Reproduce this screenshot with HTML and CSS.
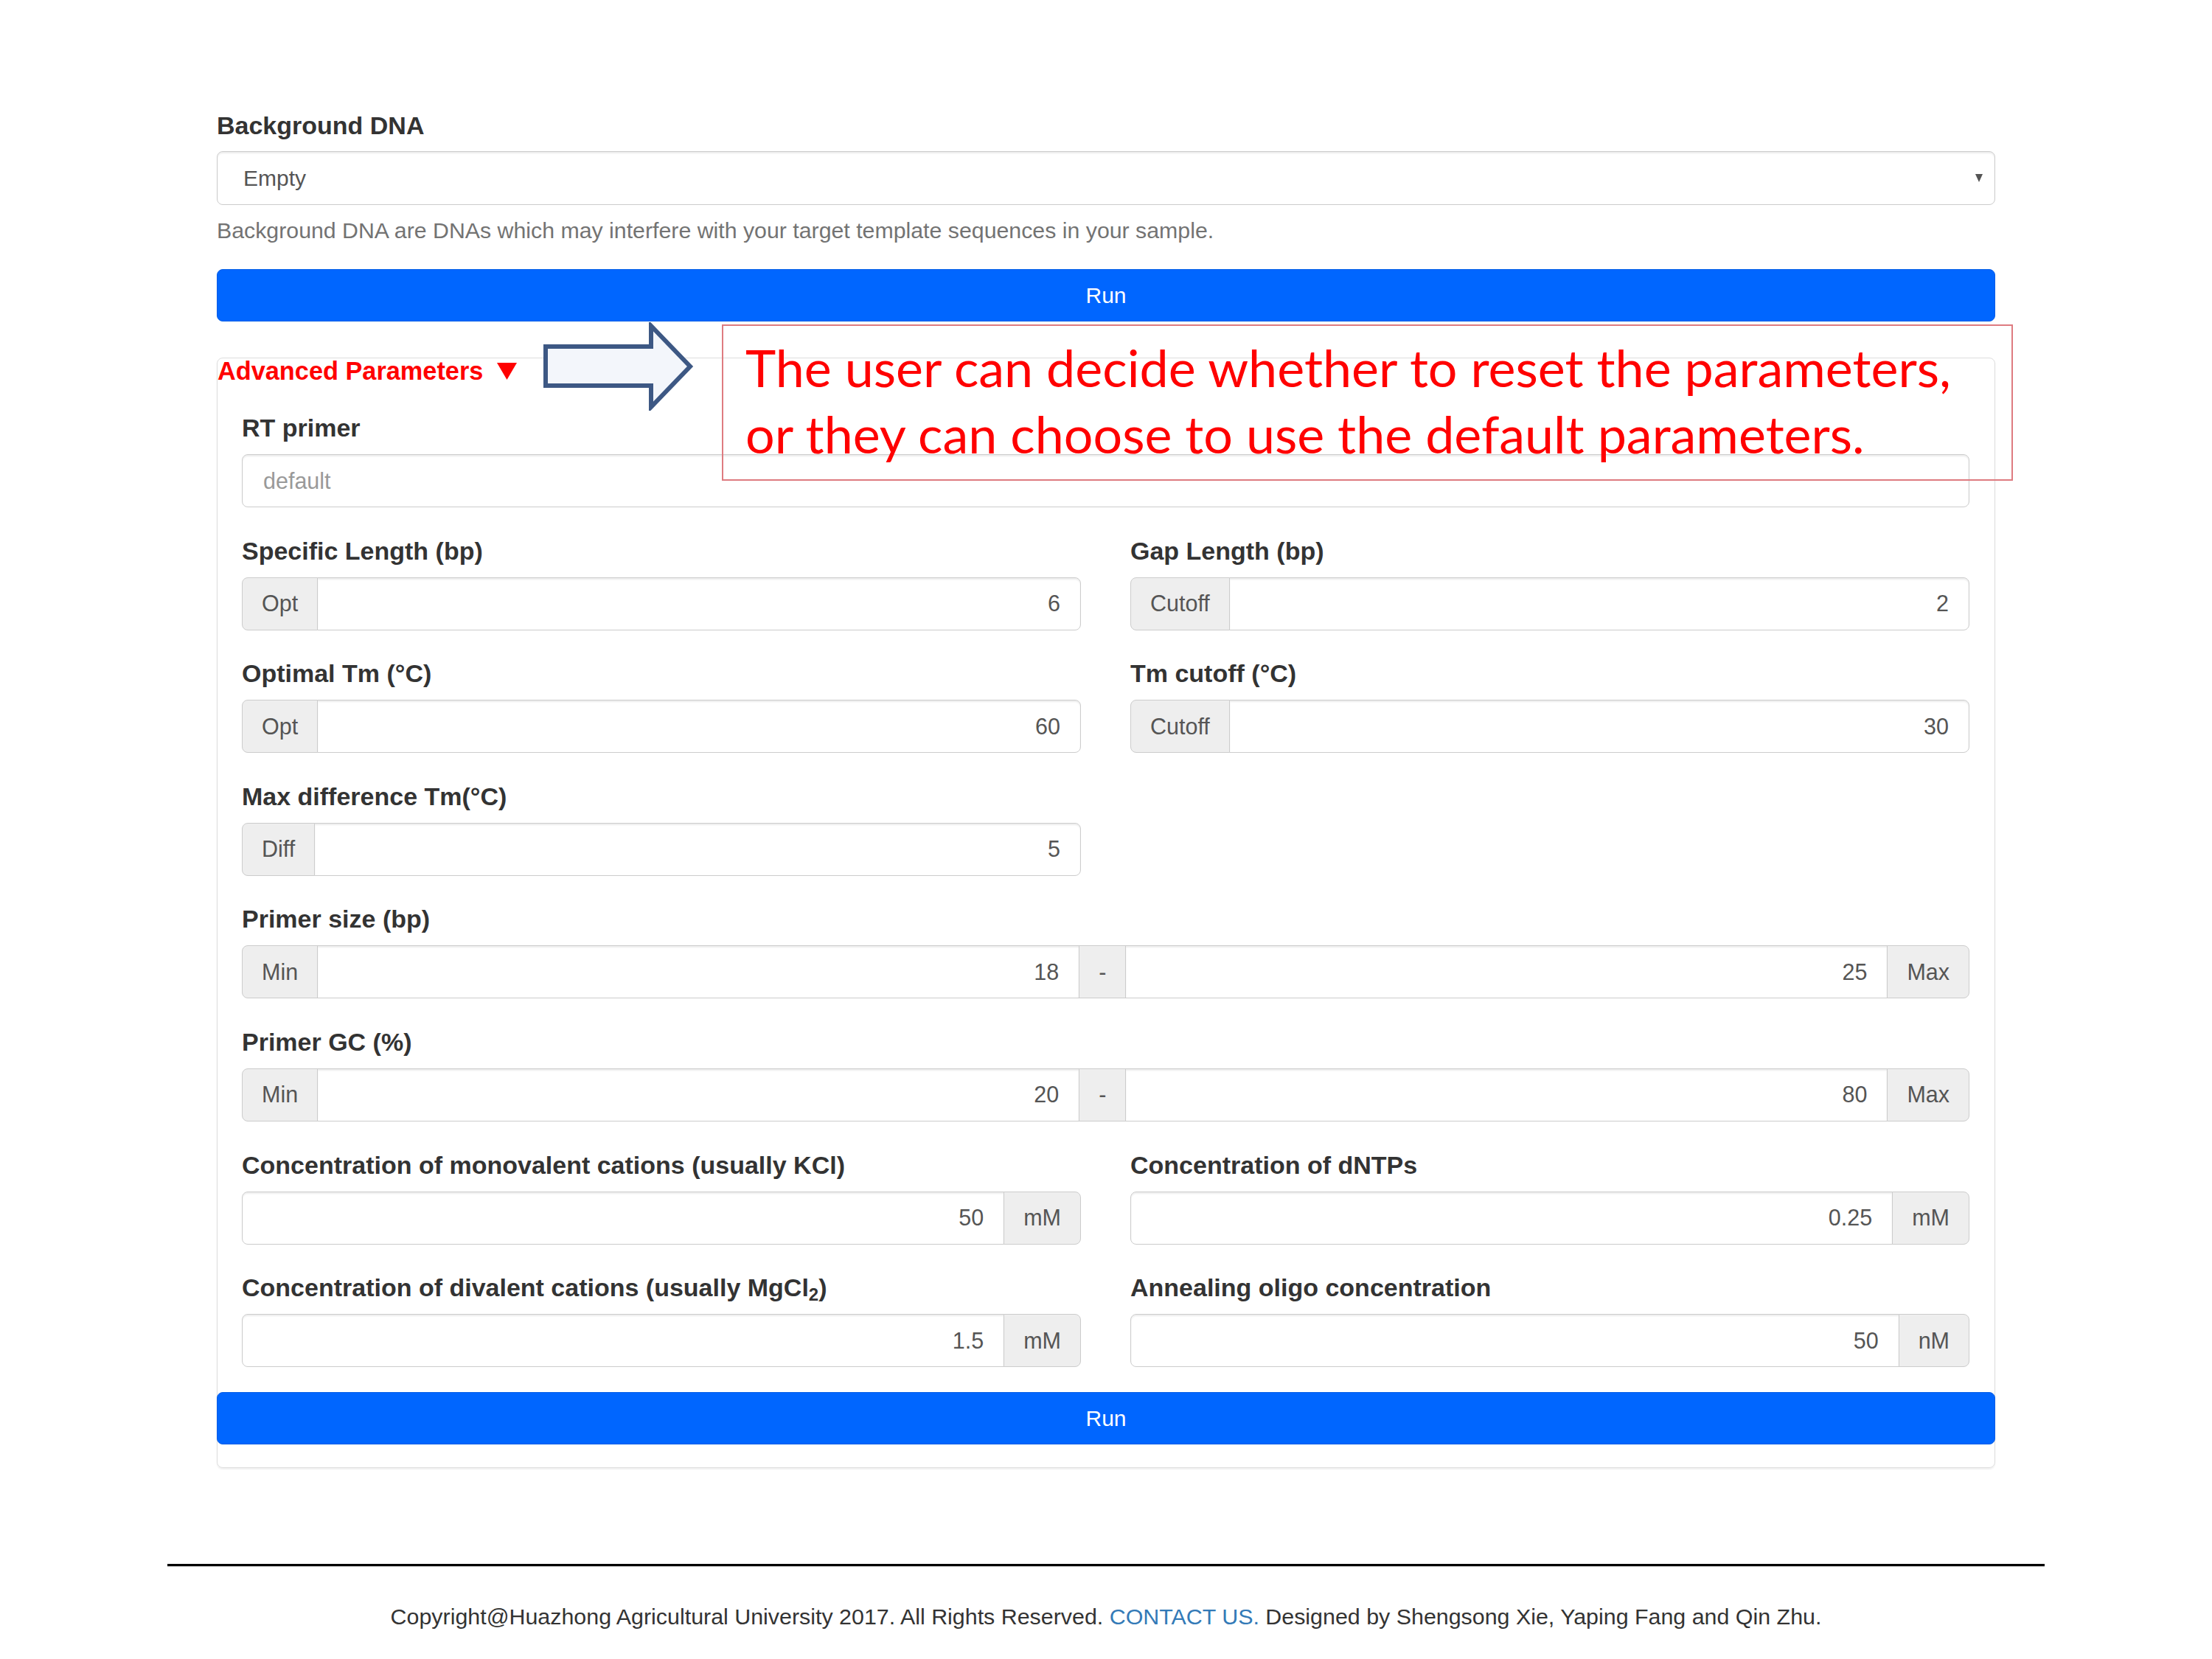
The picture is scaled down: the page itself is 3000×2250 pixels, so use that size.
FILE: index.html
```html
<!DOCTYPE html>
<html lang="en">
<head>
<meta charset="utf-8">
<title>Advanced Parameters</title>
<link rel="stylesheet" href="styles.css">
</head>
<body>
<div class="page">
  <div class="top-field">
    <label class="lbl">Background DNA</label>
    <div class="select"><span>Empty</span><span class="caret"></span></div>
    <p class="help">Background DNA are DNAs which may interfere with your target template sequences in your sample.</p>
  </div>
  <button class="run">Run</button>

  <div class="panel">
    <div class="panel-head">Advanced Parameters<svg class="tri" viewBox="0 0 27 23" width="27" height="23"><polygon points="0,0 27,0 13.5,23" fill="#ff0000"/></svg></div>
    <div class="grid">
      <div class="group full">
        <label class="lbl">RT primer</label>
        <div class="ig"><input class="ctl left" type="text" placeholder="default"></div>
      </div>

      <div class="group">
        <label class="lbl">Specific Length (bp)</label>
        <div class="ig"><span class="addon">Opt</span><input class="ctl" type="text" value="6"></div>
      </div>
      <div class="group">
        <label class="lbl">Gap Length (bp)</label>
        <div class="ig"><span class="addon">Cutoff</span><input class="ctl" type="text" value="2"></div>
      </div>

      <div class="group">
        <label class="lbl">Optimal Tm (°C)</label>
        <div class="ig"><span class="addon">Opt</span><input class="ctl" type="text" value="60"></div>
      </div>
      <div class="group">
        <label class="lbl">Tm cutoff (°C)</label>
        <div class="ig"><span class="addon">Cutoff</span><input class="ctl" type="text" value="30"></div>
      </div>

      <div class="group">
        <label class="lbl">Max difference Tm(°C)</label>
        <div class="ig"><span class="addon">Diff</span><input class="ctl" type="text" value="5"></div>
      </div>
      <div class="group empty"></div>

      <div class="group full">
        <label class="lbl">Primer size (bp)</label>
        <div class="ig"><span class="addon">Min</span><input class="ctl" type="text" value="18"><span class="addon dash">-</span><input class="ctl" type="text" value="25"><span class="addon">Max</span></div>
      </div>

      <div class="group full">
        <label class="lbl">Primer GC (%)</label>
        <div class="ig"><span class="addon">Min</span><input class="ctl" type="text" value="20"><span class="addon dash">-</span><input class="ctl" type="text" value="80"><span class="addon">Max</span></div>
      </div>

      <div class="group">
        <label class="lbl">Concentration of monovalent cations (usually KCl)</label>
        <div class="ig"><input class="ctl" type="text" value="50"><span class="addon">mM</span></div>
      </div>
      <div class="group">
        <label class="lbl">Concentration of dNTPs</label>
        <div class="ig"><input class="ctl" type="text" value="0.25"><span class="addon">mM</span></div>
      </div>

      <div class="group">
        <label class="lbl">Concentration of divalent cations (usually MgCl<sub>2</sub>)</label>
        <div class="ig"><input class="ctl" type="text" value="1.5"><span class="addon">mM</span></div>
      </div>
      <div class="group">
        <label class="lbl">Annealing oligo concentration</label>
        <div class="ig"><input class="ctl" type="text" value="50"><span class="addon">nM</span></div>
      </div>
    </div>
    <button class="run run-bottom">Run</button>
  </div>

  <svg class="arrow" viewBox="0 0 210 120" width="210" height="120"><polygon points="5,33 148,33 148,5 201,60 148,115 148,86 5,86" fill="#f3f6fb" stroke="#3d5884" stroke-width="6" stroke-linejoin="miter"/></svg>
  <div class="note">The user can decide whether to reset the parameters,<br>or they can choose to use the default parameters.</div>
</div>

<div class="rule"></div>
<p class="footer">Copyright@Huazhong Agricultural University 2017. All Rights Reserved. <a class="contact" href="#">CONTACT US.</a> Designed by Shengsong Xie, Yaping Fang and Qin Zhu.</p>
</body>
</html>
```
FILE: styles.css
```css
html, body {
  margin: 0;
  padding: 0;
  background: #ffffff;
}

body {
  font-family: "Liberation Sans", Arial, Helvetica, sans-serif;
  color: #333333;
}

.page {
  position: relative;
  width: 2412px;
  margin: 0 auto;
  padding-top: 146px;
}

.lbl {
  display: block;
  font-size: 34px;
  font-weight: bold;
  line-height: 48px;
  margin-bottom: 12px;
  color: #333333;
  white-space: nowrap;
}

.lbl sub {
  font-size: 24px;
  line-height: 0;
  vertical-align: -6px;
}

.top-field .lbl {
  margin-bottom: 11px;
}

.select {
  height: 73px;
  box-sizing: border-box;
  border: 1px solid #cccccc;
  border-radius: 8px;
  display: flex;
  align-items: center;
  justify-content: space-between;
  padding: 0 16px 0 35px;
  font-size: 30px;
  color: #555555;
  box-shadow: inset 0 2px 2px rgba(0, 0, 0, 0.075);
}

.caret {
  width: 0;
  height: 0;
  border-left: 5.5px solid transparent;
  border-right: 5.5px solid transparent;
  border-top: 11px solid #555555;
}

.help {
  margin: 13px 0 0;
  font-size: 30.3px;
  line-height: 43px;
  color: #737373;
}

.run {
  display: block;
  box-sizing: border-box;
  width: 100%;
  height: 71px;
  margin-top: 31px;
  background: #0066ff;
  border: 1px solid #005ce6;
  border-radius: 8px;
  color: #ffffff;
  font-family: "Liberation Sans", Arial, sans-serif;
  font-size: 30px;
  padding: 0;
}

.panel {
  margin-top: 49px;
  border: 1px solid #dddddd;
  border-radius: 8px;
  box-shadow: 0 2px 2px rgba(0, 0, 0, 0.06);
  padding-bottom: 31px;
}

.panel-head {
  font-size: 34.3px;
  font-weight: bold;
  line-height: 34px;
  color: #ff0000;
}

.tri {
  margin-left: 19px;
  vertical-align: baseline;
}

.grid {
  display: grid;
  grid-template-columns: 1fr 1fr;
  column-gap: 67px;
  row-gap: 34.6px;
  padding: 36px 34px 0 33px;
}

.full {
  grid-column: 1 / -1;
}

.ig {
  display: flex;
  height: 72px;
}

.ig > * {
  box-sizing: border-box;
  height: 72px;
  border: 1px solid #cccccc;
  margin: 0;
}

.ig > * + * {
  margin-left: -1px;
}

.ig > :first-child {
  border-top-left-radius: 8px;
  border-bottom-left-radius: 8px;
}

.ig > :last-child {
  border-top-right-radius: 8px;
  border-bottom-right-radius: 8px;
}

.addon {
  display: flex;
  align-items: center;
  justify-content: center;
  padding: 0 26px;
  background: #eeeeee;
  color: #555555;
  font-size: 30.5px;
  flex: none;
}

.addon.dash {
  padding: 0 26px;
}

.ctl {
  flex: 1 1 0;
  min-width: 0;
  background: #ffffff;
  font-family: "Liberation Sans", Arial, sans-serif;
  font-size: 30.5px;
  color: #555555;
  text-align: right;
  padding: 0 27px;
  outline: none;
  box-shadow: inset 0 2px 2px rgba(0, 0, 0, 0.075);
}

.ctl.left {
  text-align: left;
  padding-left: 28px;
}

.ctl::placeholder {
  color: #999999;
}

.run-bottom {
  width: calc(100% + 2px);
  margin-left: -1px;
  margin-top: 34px;
}

.arrow {
  position: absolute;
  left: 441px;
  top: 437px;
}

.note {
  position: absolute;
  left: 685px;
  top: 440px;
  width: 1751px;
  height: 212px;
  box-sizing: border-box;
  border: 2px solid #de7b80;
  padding: 11px 0 0 30px;
  font-family: Lato, "Open Sans", sans-serif;
  font-size: 70px;
  line-height: 90px;
  color: #ff0000;
  white-space: nowrap;
}

.rule {
  width: 2546px;
  margin: 130px auto 0;
  border-top: 3px solid #000000;
  box-shadow: 0 1px 0 #bbbbbb;
}

.footer {
  margin: 47px 0 0;
  text-align: center;
  font-size: 30.4px;
  line-height: 43px;
  color: #333333;
}

.contact {
  color: #337ab7;
  text-decoration: none;
}
```
